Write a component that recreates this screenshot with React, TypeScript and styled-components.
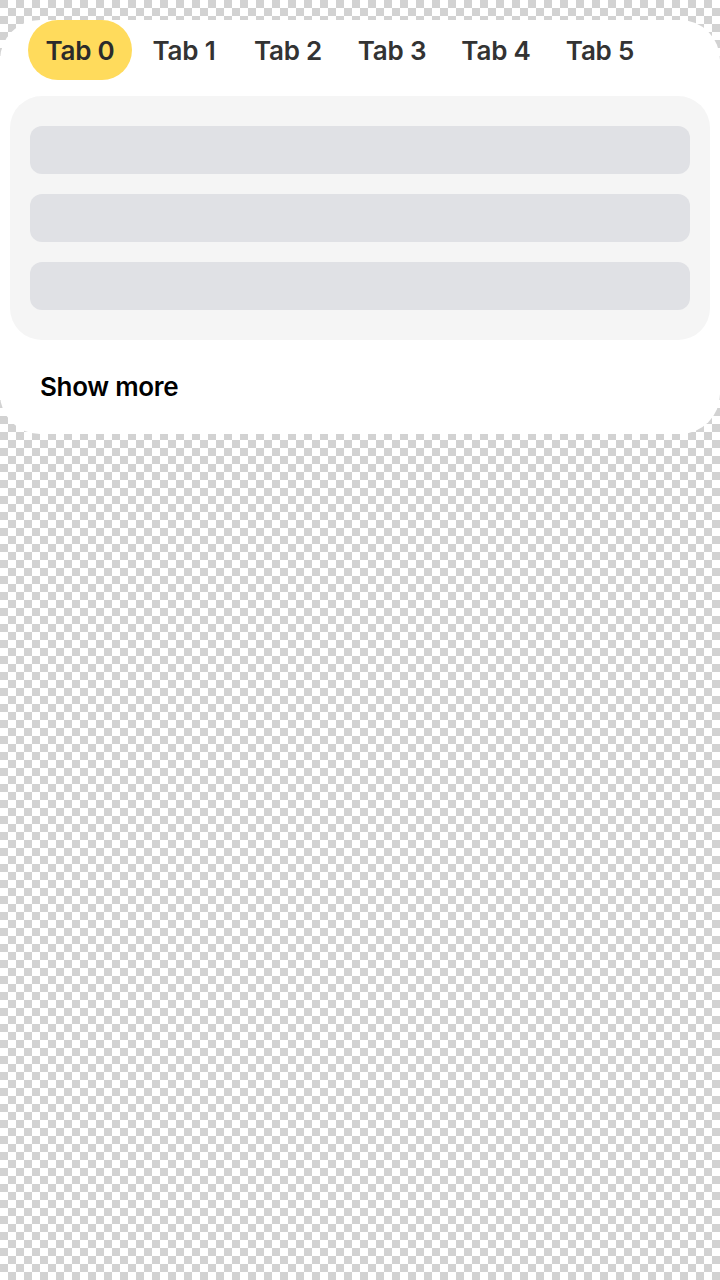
import styled, { createGlobalStyle } from 'styled-components';

const GlobalStyle = createGlobalStyle`
  html, body {
    margin: 0;
    min-height: 100%;
  }

  body {
    min-height: 1280px;
    font-family: Inter, 'Noto Sans', 'Liberation Sans', sans-serif;
    background-color: #ffffff;
    background-image: conic-gradient(
      #ffffff 25%,
      #d2d2d2 0 50%,
      #ffffff 0 75%,
      #d2d2d2 0
    );
    background-size: 16px 16px;
  }
`;

const Card = styled.section`
  margin-top: 20px;
  background: #ffffff;
  border-radius: 40px;
  padding: 0 10px;
`;

const TabList = styled.div`
  display: flex;
  padding: 0 18px;
`;

const Tab = styled.button<{ $active?: boolean }>`
  height: 60px;
  width: 104px;
  border: none;
  border-radius: 30px;
  background: ${(p) => (p.$active ? '#ffdb5c' : 'transparent')};
  color: ${(p) => (p.$active ? '#2b2b2b' : '#333333')};
  font-family: inherit;
  font-size: 26px;
  font-weight: 600;
  letter-spacing: -0.2px;
  padding: 0;
  cursor: pointer;
`;

const Content = styled.div`
  margin-top: 16px;
  background: #f5f5f5;
  border-radius: 32px;
  padding: 30px 20px;
  display: flex;
  flex-direction: column;
  gap: 20px;
`;

const Placeholder = styled.div`
  height: 48px;
  background: #e0e1e5;
  border-radius: 12px;
`;

const ShowMore = styled.div`
  padding: 32px 30px;
  line-height: 30px;
  font-size: 26px;
  font-weight: 600;
  letter-spacing: -0.3px;
  color: #000000;
`;

const tabs = ['Tab 0', 'Tab 1', 'Tab 2', 'Tab 3', 'Tab 4', 'Tab 5'];

export default function App() {
  return (
    <>
      <GlobalStyle />
      <Card>
        <TabList>
          {tabs.map((t, i) => (
            <Tab key={t} $active={i === 0}>
              {t}
            </Tab>
          ))}
        </TabList>
        <Content>
          <Placeholder />
          <Placeholder />
          <Placeholder />
        </Content>
        <ShowMore>Show more</ShowMore>
      </Card>
    </>
  );
}
